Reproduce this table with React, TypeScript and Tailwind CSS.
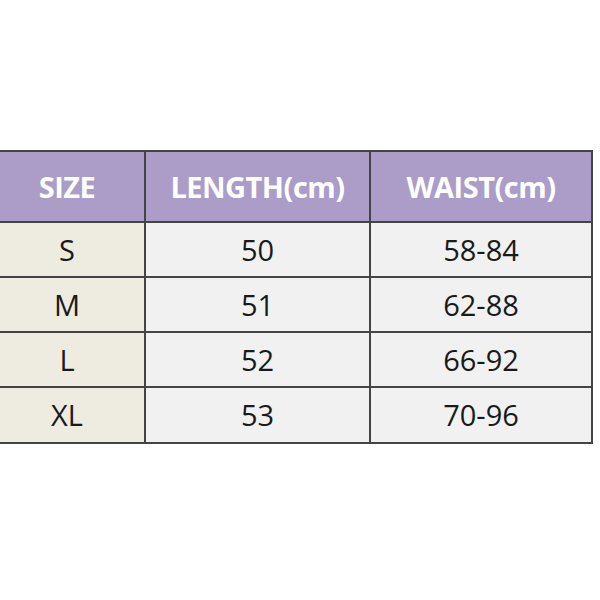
const header = ["SIZE", "LENGTH(cm)", "WAIST(cm)"];

const rows = [
  ["S", "50", "58-84"],
  ["M", "51", "62-88"],
  ["L", "52", "66-92"],
  ["XL", "53", "70-96"],
];

export default function App() {
  return (
    <div className="w-[600px] h-[600px] bg-white pt-[150px] font-['Open_Sans',sans-serif]">
      <div className="w-[593px] grid grid-cols-[144px_223px_220px] grid-rows-[69px_53px_53px_53px_54px] gap-[2px] pt-[2px] pr-[2px] pb-[2px] bg-[#444444]">
        {header.map((h, i) => (
          <div
            key={h}
            className={`flex items-center justify-center bg-[#ab9cc8] text-white font-bold text-[29px] tracking-[-0.5px] ${
              i === 0 ? "pr-[10px]" : ""
            }`}
          >
            {h}
          </div>
        ))}
        {rows.map((r) =>
          r.map((c, i) => (
            <div
              key={r[0] + i}
              className={`flex items-center justify-center text-[29px] text-[#1a1a1a] ${
                i === 0 ? "bg-[#eeebe0] pr-[10px]" : "bg-[#f1f1f1]"
              }`}
            >
              {c}
            </div>
          ))
        )}
      </div>
    </div>
  );
}
